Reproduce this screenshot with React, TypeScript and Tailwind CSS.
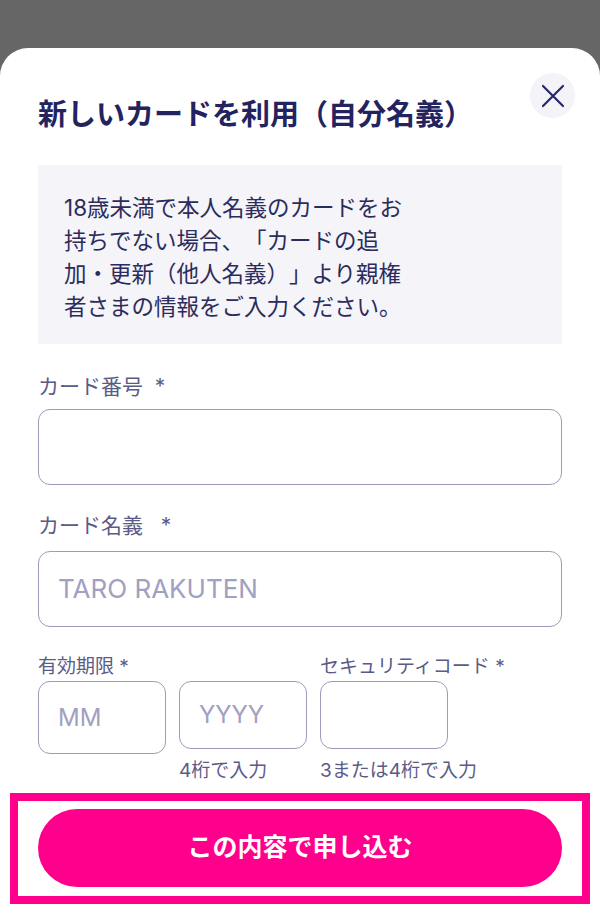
import * as React from "react";

const font = {
  fontFamily: 'Inter, "Noto Sans CJK JP", "Noto Sans", sans-serif',
};

function CloseButton() {
  return (
    <button
      type="button"
      aria-label="閉じる"
      className="absolute right-[25px] top-[25px] flex h-[45px] w-[45px] items-center justify-center rounded-full bg-[#f3f3f8]"
    >
      <svg width="24" height="24" viewBox="0 0 24 24" aria-hidden="true">
        <path d="M2 2 L22 22 M22 2 L2 22" stroke="#27276b" strokeWidth="2.2" strokeLinecap="round" fill="none" />
      </svg>
    </button>
  );
}

function TextField({ placeholder }: { placeholder?: string }) {
  return (
    <div className="flex h-[76px] items-center rounded-[12px] border-[1.5px] border-[#9c9cbd] px-[19px]">
      {placeholder && <span className="text-[26px] leading-none text-[#a0a0c2]">{placeholder}</span>}
    </div>
  );
}

function SmallBox({ placeholder, tall }: { placeholder?: string; tall?: boolean }) {
  return (
    <div
      className={
        tall
          ? "flex h-[73px] w-[128px] items-center rounded-[12px] border-[1.5px] border-[#9c9cbd] px-[19px]"
          : "flex h-[68px] w-[128px] items-center rounded-[12px] border-[1.5px] border-[#9c9cbd] px-[19px]"
      }
    >
      {placeholder && <span className="text-[24px] leading-none text-[#a0a0c2]">{placeholder}</span>}
    </div>
  );
}

export default function App() {
  return (
    <div className="flex h-[924px] w-[600px] flex-col bg-[#666666] pt-[48px] [text-spacing-trim:space-all]" style={font}>
      <div className="relative flex flex-1 flex-col rounded-t-[28px] bg-white px-[38px]">
        <CloseButton />

        <h1 className="pt-[47px] text-[29px] font-bold leading-[40px] text-[#23235f]">
          新しいカードを利用（自分名義）
        </h1>

        <div className="mt-[30px] h-[179px] bg-[#f4f4f9] px-[26px] pt-[26px] text-[22.5px] leading-[33px] text-[#2c2c5c]">
          18歳未満で本人名義のカードをお
          <br />
          持ちでない場合、「カードの追
          <br />
          加・更新（他人名義）」より親権
          <br />
          者さまの情報をご入力ください。
        </div>

        <label className="mt-[29px] text-[21px] leading-[28px] text-[#5b5b88]">カード番号 &nbsp;*</label>
        <div className="mt-[8px]">
          <TextField />
        </div>

        <label className="mt-[27px] text-[21px] leading-[28px] text-[#5b5b88]">カード名義 &nbsp;&nbsp;*</label>
        <div className="mt-[11px]">
          <TextField placeholder="TARO RAKUTEN" />
        </div>

        <div className="mt-[28px] flex gap-[13px] text-[19px] leading-[24px] text-[#5b5b88]">
          <div className="flex flex-col">
            <span className="whitespace-nowrap">有効期限 *</span>
            <div className="mt-[2px]">
              <SmallBox placeholder="MM" tall />
            </div>
          </div>
          <div className="flex flex-col">
            <span className="h-[24px]" />
            <div className="mt-[2px]">
              <SmallBox placeholder="YYYY" />
            </div>
            <span className="mt-[10px] whitespace-nowrap">4桁で入力</span>
          </div>
          <div className="flex flex-col">
            <span className="whitespace-nowrap">セキュリティコード *</span>
            <div className="mt-[2px]">
              <SmallBox />
            </div>
            <span className="mt-[10px] whitespace-nowrap">3または4桁で入力</span>
          </div>
        </div>

        <div className="mx-[-28px] mt-[10px] border-[8px] border-[#ff008c] px-[20px] pb-[9px] pt-[8px]">
          <button
            type="button"
            className="flex h-[78px] w-full items-center justify-center rounded-full bg-[#ff008c] text-[25px] font-bold text-white"
          >
            この内容で申し込む
          </button>
        </div>
      </div>
    </div>
  );
}
